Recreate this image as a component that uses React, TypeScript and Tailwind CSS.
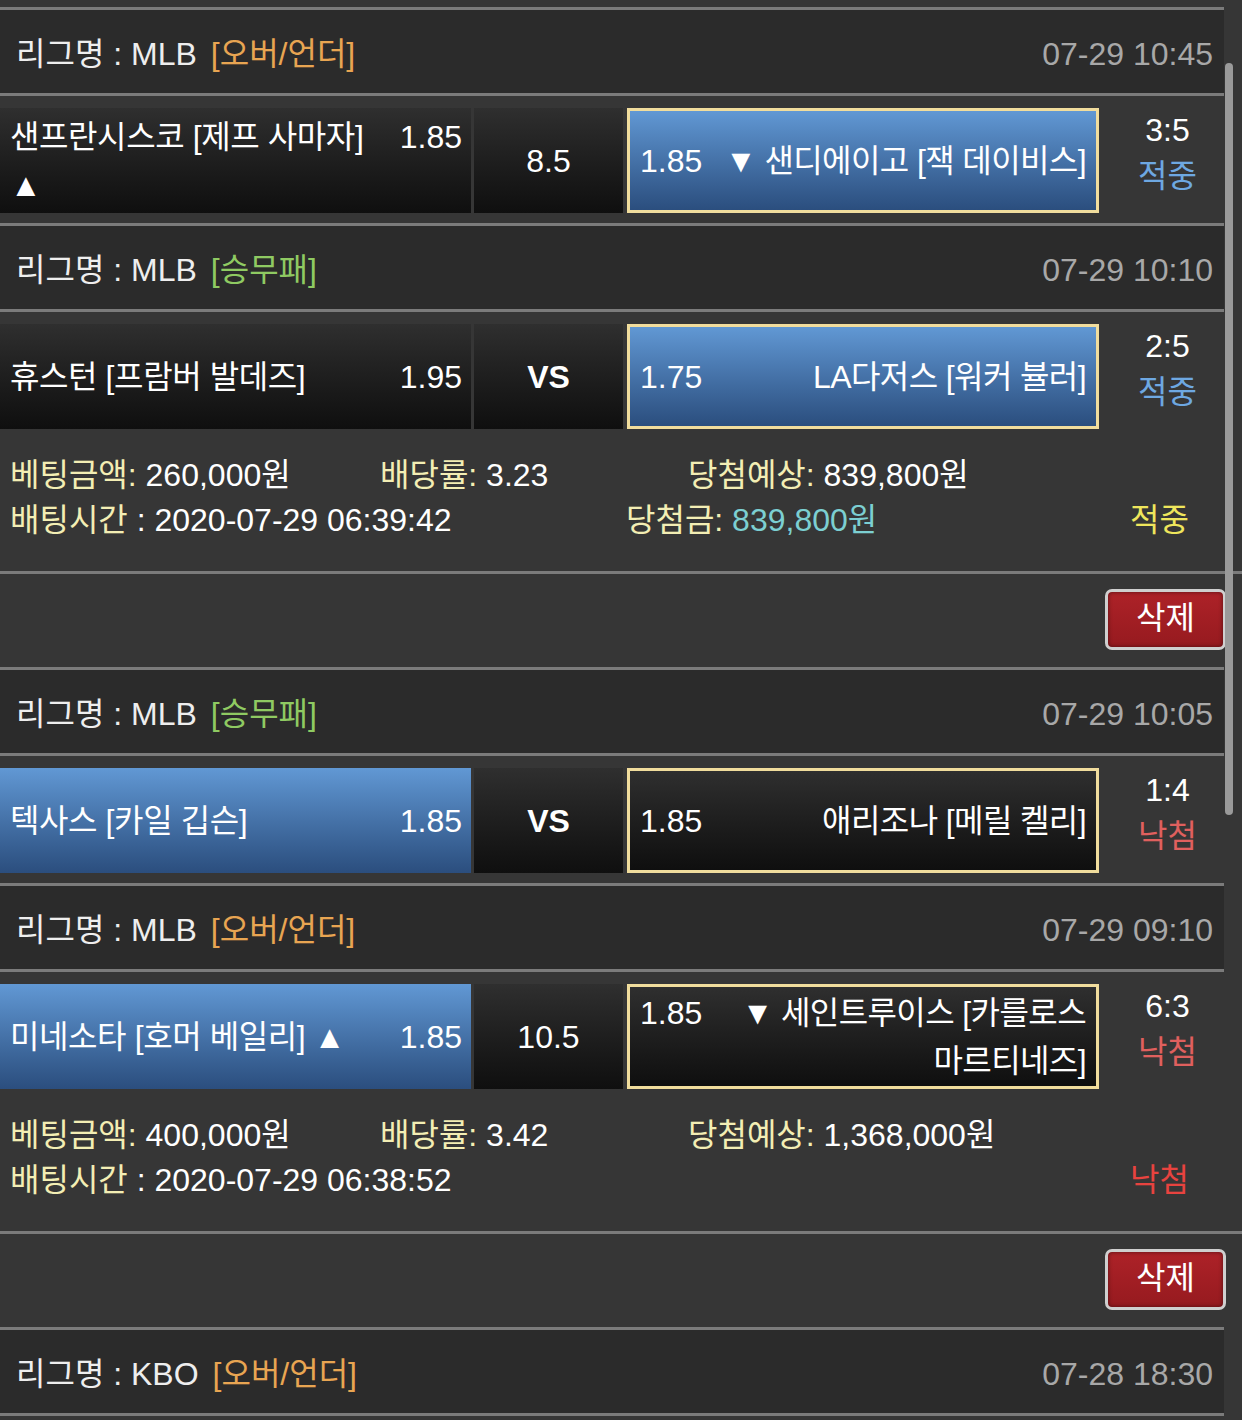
import React from "react";

type Side = {
  odds: string;
  name: React.ReactNode;
  picked?: boolean;
};

type Game = {
  league: string;
  kind: string;
  kindColor: string;
  time: string;
  home: Side;
  mid: string;
  midBold?: boolean;
  away: Side;
  score: string;
  result: "적중" | "낙첨";
};

const Line = () => <div className="h-[3px] w-[1224px] bg-[#7b7b7b]" />;

const Header = ({ g }: { g: Game }) => (
  <div className="flex h-[83px] w-[1224px] items-center justify-between bg-[#2b2b2b] pl-[16px] pr-[11px] pt-[4px]">
    <div className="text-[#eeeeee]">
      리그명 : {g.league}
      <span className={`ml-[14px] ${g.kindColor}`}>{g.kind}</span>
    </div>
    <div className="text-[#a8a8a8]">{g.time}</div>
  </div>
);

const darkCell = "bg-gradient-to-b from-[#2f2f2f] to-[#0f0f0f]";
const blueCell = "bg-gradient-to-b from-[#6198d4] to-[#2b4e7e]";

const MatchRow = ({ g, last }: { g: Game; last?: boolean }) => (
  <div className={`flex w-[1224px] bg-[#363636] pt-[12px] ${last ? "pb-0" : "pb-[10px]"}`}>
    <div
      className={`flex h-[105px] w-[471px] items-center pl-[10px] pr-[9px] ${
        g.home.picked ? blueCell : darkCell
      }`}
    >
      <div className="flex w-full items-start justify-between">
        <div className="leading-[48px] tracking-[-0.4px] text-white">{g.home.name}</div>
        <div className="shrink-0 pl-[8px] leading-[48px] text-white">{g.home.odds}</div>
      </div>
    </div>
    <div
      className={`ml-[3px] flex h-[105px] w-[149px] items-center justify-center text-white ${darkCell} ${
        g.midBold ? "font-bold" : ""
      }`}
    >
      {g.mid}
    </div>
    <div
      className={`ml-[4px] flex h-[105px] w-[472px] items-center border-[3px] border-[#f1dd9d] pl-[10px] pr-[10px] ${
        g.away.picked ? blueCell : darkCell
      }`}
    >
      <div className="flex w-full items-start justify-between">
        <div className="shrink-0 pr-[6px] leading-[48px] text-white">{g.away.odds}</div>
        <div className="text-right leading-[48px] tracking-[-0.6px] text-white">{g.away.name}</div>
      </div>
    </div>
    <div className="flex h-[105px] w-[125px] flex-col items-center justify-center pb-[16px] pl-[12px] leading-[46px]">
      <div className="text-white">{g.score}</div>
      <div className={g.result === "적중" ? "text-[#6ea8e2]" : "text-[#e0605e]"}>{g.result}</div>
    </div>
  </div>
);

const Info = ({
  amount,
  rate,
  expect,
  time,
  win,
  result,
}: {
  amount: string;
  rate: string;
  expect: string;
  time: string;
  win?: string;
  result: "적중" | "낙첨";
}) => (
  <div className="w-[1242px] bg-[#363636] pl-[10px] pt-[24px] pb-[28px] leading-[45px]">
    <div className="flex">
      <div className="w-[370px]">
        <span className="text-[#f3eeb4]">베팅금액:</span> <span className="text-white">{amount}</span>
      </div>
      <div className="w-[308px]">
        <span className="text-[#f3eeb4]">배당률:</span> <span className="text-white">{rate}</span>
      </div>
      <div>
        <span className="text-[#f3eeb4]">당첨예상:</span> <span className="text-white">{expect}</span>
      </div>
    </div>
    <div className="flex">
      <div className="w-[616px]">
        <span className="text-[#f3eeb4]">배팅시간</span> <span className="text-white">: {time}</span>
      </div>
      <div className="w-[504px]">
        {win && (
          <>
            <span className="text-[#f3eeb4]">당첨금:</span> <span className="text-[#7ccfd2]">{win}</span>
          </>
        )}
      </div>
      <div className={result === "적중" ? "text-[#efe65c]" : "text-[#e8433f]"}>{result}</div>
    </div>
  </div>
);

const FullLine = () => <div className="h-[3px] w-[1242px] bg-[#7b7b7b]" />;

const DeleteBar = () => (
  <div className="flex h-[93px] w-[1226px] justify-end bg-[#363636] pt-[15px]">
    <button className="h-[61px] w-[121px] rounded-[7px] border-[3px] border-[#cfcfcf] bg-gradient-to-b from-[#ad2228] to-[#961a1f] pb-[3px] text-white shadow-[inset_0_0_4px_rgba(0,0,0,0.5)]">
      삭제
    </button>
  </div>
);

const ou = "text-[#e8a552]";
const wdl = "text-[#8fca62]";

const g1: Game = {
  league: "MLB",
  kind: "[오버/언더]",
  kindColor: ou,
  time: "07-29 10:45",
  home: { odds: "1.85", name: <>샌프란시스코 [제프 사마자] ▲</> },
  mid: "8.5",
  away: { odds: "1.85", name: <>▼ 샌디에이고 [잭 데이비스]</>, picked: true },
  score: "3:5",
  result: "적중",
};

const g2: Game = {
  league: "MLB",
  kind: "[승무패]",
  kindColor: wdl,
  time: "07-29 10:10",
  home: { odds: "1.95", name: <>휴스턴 [프람버 발데즈]</> },
  mid: "VS",
  midBold: true,
  away: { odds: "1.75", name: <>LA다저스 [워커 뷸러]</>, picked: true },
  score: "2:5",
  result: "적중",
};

const g3: Game = {
  league: "MLB",
  kind: "[승무패]",
  kindColor: wdl,
  time: "07-29 10:05",
  home: { odds: "1.85", name: <>텍사스 [카일 깁슨]</>, picked: true },
  mid: "VS",
  midBold: true,
  away: { odds: "1.85", name: <>애리조나 [메릴 켈리]</> },
  score: "1:4",
  result: "낙첨",
};

const g4: Game = {
  league: "MLB",
  kind: "[오버/언더]",
  kindColor: ou,
  time: "07-29 09:10",
  home: { odds: "1.85", name: <>미네소타 [호머 베일리] ▲</>, picked: true },
  mid: "10.5",
  away: { odds: "1.85", name: <>▼ 세인트루이스 [카를로스 마르티네즈]</> },
  score: "6:3",
  result: "낙첨",
};

const g5: Game = {
  league: "KBO",
  kind: "[오버/언더]",
  kindColor: ou,
  time: "07-28 18:30",
  home: { odds: "", name: "" },
  mid: "",
  away: { odds: "", name: "" },
  score: "",
  result: "적중",
};

export default function App() {
  return (
    <div
      className="relative h-[1420px] w-[1242px] overflow-hidden bg-[#363636] pt-[7px] text-[32px] leading-none"
      style={{ fontFamily: '"Liberation Sans", "Noto Sans CJK KR", sans-serif' }}
    >
      <Line />
      <Header g={g1} />
      <Line />
      <MatchRow g={g1} />
      <Line />
      <Header g={g2} />
      <Line />
      <MatchRow g={g2} last />
      <Info amount="260,000원" rate="3.23" expect="839,800원" time="2020-07-29 06:39:42" win="839,800원" result="적중" />
      <FullLine />
      <DeleteBar />
      <Line />
      <Header g={g3} />
      <Line />
      <MatchRow g={g3} />
      <Line />
      <Header g={g4} />
      <Line />
      <MatchRow g={g4} last />
      <Info amount="400,000원" rate="3.42" expect="1,368,000원" time="2020-07-29 06:38:52" result="낙첨" />
      <FullLine />
      <DeleteBar />
      <Line />
      <Header g={g5} />
      <Line />

      <div className="absolute right-[9px] top-[63px] h-[752px] w-[8px] rounded-full bg-[#9a9a9a]" />
    </div>
  );
}
